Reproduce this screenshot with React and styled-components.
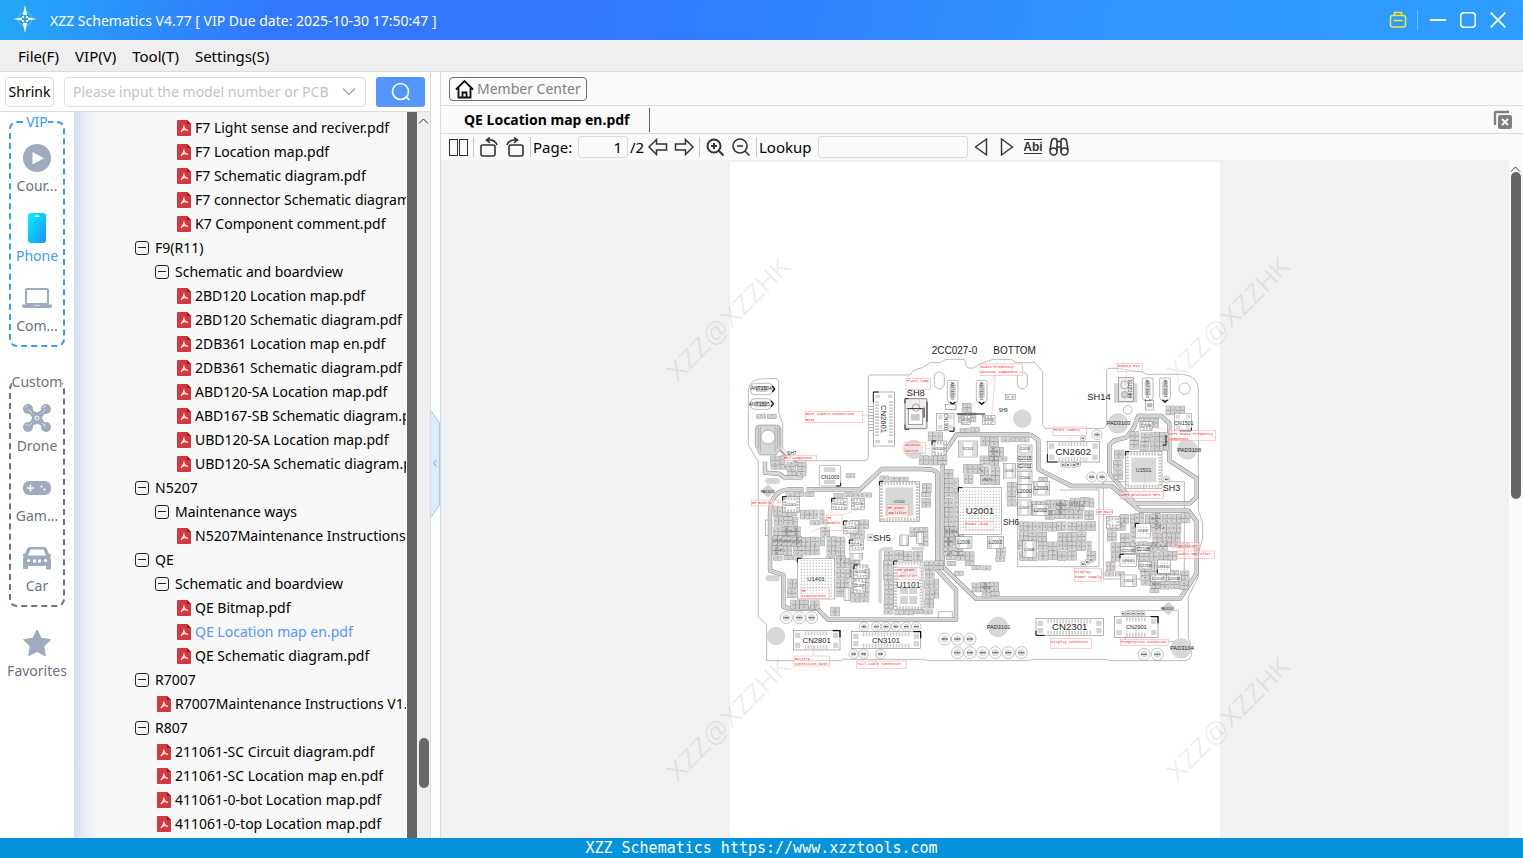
import React, { useState } from "react";
import styled, { createGlobalStyle } from "styled-components";

const GlobalStyle = createGlobalStyle`
  * {
    box-sizing: border-box;
  }
  body {
    margin: 0;
    font-family: "Noto Sans", "Open Sans", sans-serif;
    font-size: 14px;
    color: #000;
  }
  button, input {
    font: inherit;
    color: inherit;
  }
  button {
    padding: 0;
    border: 0;
    background: none;
  }
  svg {
    display: block;
    flex: none;
  }
`;

const Window = styled.div`
  display: flex;
  flex-direction: column;
  height: 100vh;
  overflow: hidden;
`;

const TitleBar = styled.header`
  display: flex;
  align-items: center;
  height: 40px;
  flex: none;
  padding: 0 10px 0 12px;
  background: linear-gradient(100deg, #23a8f6 0%, #3377ff 18%, #3377ff 38%, #2f94ff 72%, #2e9dff 100%);
  color: #fff;
`;

const Title = styled.h1`
  flex: 1;
  margin: 0 0 0 12px;
  font-size: 14px;
  font-weight: 400;
`;

const WindowButton = styled.button`
  display: flex;
  align-items: center;
  justify-content: center;
  width: 30px;
  height: 30px;
`;

const TitleDivider = styled.span`
  width: 1px;
  height: 20px;
  margin: 0 5px 0 4px;
  background: rgba(255, 255, 255, 0.35);
`;

const MenuBar = styled.nav`
  display: flex;
  align-items: center;
  gap: 16px;
  height: 32px;
  flex: none;
  padding: 0 18px;
  background: #efefef;
  border-bottom: 1px solid #dcdcdc;
`;

const MenuItem = styled.button`
  font-size: 15px;
`;

const Body = styled.div`
  display: flex;
  flex: 1;
  min-height: 0;
`;

const Side = styled.aside`
  display: flex;
  flex-direction: column;
  width: 431px;
  flex: none;
  border-right: 1px solid #dcdcdc;
`;

const SearchRow = styled.form`
  display: flex;
  align-items: center;
  gap: 10px;
  height: 40px;
  flex: none;
  padding: 0 5px;
  border-bottom: 1px solid #dcdcdc;
`;

const ShrinkButton = styled.button`
  width: 49px;
  height: 30px;
  border: 1px solid #dcdfe6;
  border-radius: 4px;
  font-size: 14px;
`;

const Combo = styled.label`
  display: flex;
  align-items: center;
  flex: 1;
  height: 30px;
  padding: 0 8px;
  border: 1px solid #dcdfe6;
  border-radius: 4px;
`;

const ComboInput = styled.input`
  flex: 1;
  min-width: 0;
  padding: 0;
  border: 0;
  outline: 0;
  font-size: 14px;
  &::placeholder {
    color: #c0c4cc;
  }
`;

const SearchButton = styled.button`
  display: flex;
  align-items: center;
  justify-content: center;
  width: 49px;
  height: 30px;
  border-radius: 3px;
  background: #5595ff;
`;

const SideBody = styled.div`
  display: flex;
  flex: 1;
  min-height: 0;
`;

const Categories = styled.div`
  width: 74px;
  flex: none;
  background: #fff;
`;

const Group = styled.fieldset`
  width: 56px;
  min-width: 0;
  margin: 0 9px ${(p) => p.$gap}px;
  padding: 10px 0 7px;
  border: 2px dashed ${(p) => p.$color};
  border-radius: 8px;
`;

const GroupName = styled.legend`
  margin: 0 auto;
  padding: 0;
  line-height: 20px;
  color: ${(p) => p.$color};
`;

const Category = styled.button`
  display: flex;
  flex-direction: column;
  align-items: center;
  width: 100%;
  height: 56px;
  color: ${(p) => (p.$active ? "#3a9bfd" : "#6b7280")};
  & + & {
    margin-top: 14px;
  }
`;

const CategoryIcon = styled.span`
  display: flex;
  align-items: center;
  justify-content: center;
  height: 32px;
  color: #a0aabf;
`;

const CategoryName = styled.span`
  line-height: 24px;
`;

const Tree = styled.ul`
  display: flex;
  flex-direction: column;
  justify-content: flex-end;
  flex: 1;
  min-width: 0;
  margin: 0;
  padding: 0 0 2px;
  overflow: hidden;
  list-style: none;
  background: linear-gradient(90deg, #d3def2 0, #e6ecf6 10px, #f4f6f9 22px, #f8f8f8 34px);
`;

const TreeRow = styled.li`
  display: flex;
  align-items: center;
  height: 24px;
  flex: none;
  padding-left: ${(p) => 61 + p.$level * 20}px;
  white-space: nowrap;
`;

const Slot = styled.span`
  width: 20px;
  flex: none;
`;

const TreeLink = styled.a`
  font-size: 14px;
  line-height: 24px;
  color: ${(p) => (p.$selected ? "#5595ff" : "#000")};
  text-decoration: none;
`;

const TreeEdge = styled.div`
  width: 10px;
  flex: none;
  margin-left: 1px;
  background: #666;
`;

const ScrollTrack = styled.div`
  display: flex;
  flex-direction: column;
  align-items: center;
  width: 13px;
  flex: none;
  padding-top: 6px;
  background: ${(p) => p.$background};
`;

const Thumb = styled.div`
  width: 10px;
  height: ${(p) => p.$height}px;
  margin-top: ${(p) => p.$top}px;
  border-radius: 5px;
  background: #666;
`;

const Splitter = styled.div`
  display: flex;
  align-items: center;
  width: 9px;
  flex: none;
  padding-top: 18px;
  background: #fafffa;
`;

const Main = styled.main`
  display: flex;
  flex-direction: column;
  flex: 1;
  min-width: 0;
  border-left: 1px solid #dcdcdc;
  background: #fafafa;
`;

const TopRow = styled.div`
  display: flex;
  align-items: center;
  height: 34px;
  flex: none;
  padding: 0 8px;
  border-bottom: 1px solid #dcdcdc;
`;

const MemberButton = styled.button`
  display: flex;
  align-items: center;
  gap: 3px;
  height: 24px;
  padding: 0 5px;
  border: 1px solid #707070;
  border-radius: 4px;
  color: #808080;
  font-size: 14px;
`;

const TabRow = styled.div`
  display: flex;
  align-items: center;
  justify-content: space-between;
  height: 28px;
  flex: none;
  padding-right: 10px;
  border-bottom: 1px solid #dcdcdc;
`;

const Tab = styled.button`
  height: 24px;
  padding: 0 19px 0 23px;
  border-right: 1px solid #666;
  font-size: 14px;
  font-weight: 700;
`;

const Toolbar = styled.div`
  display: flex;
  align-items: center;
  height: 26px;
  flex: none;
  padding-left: 4px;
`;

const ToolButton = styled.button`
  display: flex;
  align-items: center;
  justify-content: center;
  width: 26px;
  height: 26px;
  color: #333;
`;

const ToolDivider = styled.span`
  width: 1px;
  height: 20px;
  margin: 0 2px;
  background: #c8c8c8;
`;

const ToolLabel = styled.label`
  width: ${(p) => p.$width}px;
  font-size: 15px;
  white-space: nowrap;
`;

const ToolInput = styled.input`
  width: ${(p) => p.$width}px;
  height: 22px;
  padding: 0 5px;
  border: 1px solid #dcdcdc;
  border-radius: 3px;
  background: #fafafa;
  font-size: 15px;
  text-align: right;
`;

const PageTotal = styled.span`
  width: 17px;
  padding-left: 2px;
  font-size: 15px;
`;

const Viewer = styled.div`
  display: flex;
  flex: 1;
  min-height: 0;
  padding-right: 1px;
  overflow: hidden;
`;

const Canvas = styled.div`
  display: flex;
  justify-content: center;
  flex: 1;
  min-width: 0;
  padding-top: 2px;
  overflow: hidden;
  background: #f1f1f1;
`;

const Sheet = styled.div`
  width: 490px;
  height: 693px;
  flex: none;
  background: #fff;
`;

const BoardSvg = styled.svg`
  width: 490px;
  height: 676px;
  overflow: visible;
  font-family: "Liberation Sans", sans-serif;
`;

const Footer = styled.footer`
  height: 20px;
  flex: none;
  background: #0493db;
  color: #fff;
  font-family: "DejaVu Sans Mono", monospace;
  font-size: 15px;
  line-height: 20px;
  text-align: center;
`;

/* ---------- icons ---------- */

const Logo = () => (
  <svg width="26" height="32" viewBox="0 0 26 32">
    <circle cx="13" cy="15" r="7" fill="none" stroke="#fff" strokeOpacity=".3" />
    <path d="M13 1l2.2 10h-4.400zM13 29l2.200-10h-4.400zM1 15l9-1.600v3.200zM25 15l-9-1.600v3.200z" fill="#fff" />
    <path d="M10 12h2v2h-2zM14 12h2v2h-2zM10 16h2v2h-2zM14 16h2v2h-2z" fill="#fff" />
  </svg>
);

const PlayIcon = () => (
  <svg width="28" height="28" viewBox="0 0 28 28">
    <circle cx="14" cy="14" r="14" fill="currentColor" />
    <path d="M9.500 8v12.500L21 14.200z" fill="#fff" />
  </svg>
);

const PhoneIcon = () => (
  <svg width="18" height="30" viewBox="0 0 18 30">
    <defs>
      <linearGradient id="phone" x1="0" y1="0" x2="1" y2="1">
        <stop offset="0" stopColor="#05f0ff" />
        <stop offset="1" stopColor="#1e90ff" />
      </linearGradient>
    </defs>
    <rect width="18" height="30" rx="3" fill="url(#phone)" />
    <rect x="6.500" y="2.500" width="5" height="1.500" rx=".7" fill="#fff" />
  </svg>
);

const LaptopIcon = () => (
  <svg width="30" height="20" viewBox="0 0 30 20">
    <rect x="4" y="1" width="22" height="15" rx="1" fill="none" stroke="currentColor" strokeWidth="2" />
    <path d="M0 16.500h12v1h6v-1h12v1.500q0 2-2 2H2q-2 0-2-2z" fill="currentColor" />
  </svg>
);

const DroneIcon = () => (
  <svg width="28" height="28" viewBox="0 0 28 28" fill="currentColor">
    <path d="M6 6L11 14L6 22M22 6L17 14L22 22M6 6L14 10L22 6M6 22L14 18L22 22" fill="none" stroke="currentColor" strokeWidth="3" />
    <circle cx="5" cy="5" r="5" />
    <circle cx="23" cy="5" r="5" />
    <circle cx="5" cy="23" r="5" />
    <circle cx="23" cy="23" r="5" />
    <circle cx="14" cy="14" r="5" />
    <circle cx="14" cy="14" r="2" fill="none" stroke="#fff" />
    <path d="M2 4q1-2 3-2M20 4q1-2 3-2M2 22q1-2 3-2M20 22q1-2 3-2M5 5l4 4M23 5l-4 4M5 23l4-4M23 23l-4-4" fill="none" stroke="#e4e8f0" strokeWidth=".8" />
  </svg>
);

const GameIcon = () => (
  <svg width="28" height="14" viewBox="0 0 28 14">
    <rect width="28" height="14" rx="6" fill="currentColor" />
    <path d="M7.500 3.500v7M4 7h7" stroke="#fff" strokeWidth="1.600" />
    <circle cx="18.500" cy="5.500" r="1" fill="#fff" />
    <circle cx="21.500" cy="8.500" r="1" fill="#fff" />
  </svg>
);

const CarIcon = () => (
  <svg width="28" height="24" viewBox="0 0 28 24">
    <path
      d="M7 1h14q2 0 3 2l2 5 2 .500v2l-1 .500q1 1.500 1 3v8.500q0 1-1 1h-3q-1 0-1-1V20H5v2q0 1-1 1H1q-1 0-1-1v-8.500q0-1.500 1-3L0 10V8l2-.500 2-4.500q1-2 3-2zM7.500 3.500L5 9.500h18l-2.500-6z"
      fill="currentColor"
      fillRule="evenodd"
    />
    <circle cx="5.500" cy="14.500" r="1.600" fill="#fff" />
    <circle cx="22.500" cy="14.500" r="1.600" fill="#fff" />
    <path d="M10 13.500h3v3h-3zM15 13.500h3v3h-3z" fill="#fff" />
  </svg>
);

const StarIcon = () => (
  <svg width="28" height="28" viewBox="0 0 28 28">
    <path
      d="M14 1.500l4 8 9 1.300-6.500 6.400 1.500 9.200-8-4.300-8 4.300 1.500-9.200L1 10.800l9-1.300z"
      fill="currentColor"
      stroke="currentColor"
      strokeWidth="1.500"
      strokeLinejoin="round"
    />
  </svg>
);

const PdfIcon = () => (
  <svg width="18" height="16" viewBox="-2 0 18 16">
    <path d="M1 0h9l4 4v11q0 1-1 1H1q-1 0-1-1V1q0-1 1-1z" fill="#d3383f" />
    <path d="M10 0l4 4h-4z" fill="#8f1a20" />
    <path d="M6.800 5.500q.500 3-3 6.500M6.800 5.500q.200 4 4.200 5M4.500 10.800q3-1.800 6.500-.600" fill="none" stroke="#fff" strokeWidth="1.100" />
  </svg>
);

const CollapseIcon = () => (
  <svg width="14" height="14" viewBox="0 0 14 14" fill="none" stroke="#222">
    <rect x=".5" y=".5" width="13" height="13" rx="2.500" />
    <path d="M3 6.500h8" />
  </svg>
);

const UpCaret = () => (
  <svg width="11" height="6" viewBox="0 0 11 6" fill="none" stroke="#333">
    <path d="M1 5.500l4.500-4.500L10 5.500" />
  </svg>
);

const Stroke = ({ size = 20, width = 1.6, children }) => (
  <svg width={size} height={size} viewBox="0 0 20 20" fill="none" stroke="currentColor" strokeWidth={width}>
    {children}
  </svg>
);

/* ---------- board drawing ---------- */

// areas packed with small passives: x, y, w, h
const CLUSTERS = [
  [535, 275, 70, 26], [535, 345, 80, 26], [50, 220, 45, 22], [90, 345, 42, 48], [140, 365, 40, 38],
  [612, 385, 42, 240], [665, 190, 32, 30], [618, 193, 30, 16], [652, 218, 100, 36], [660, 262, 60, 10],
  [670, 372, 80, 62], [720, 290, 60, 150], [782, 290, 95, 12], [745, 320, 40, 42], [135, 455, 82, 14],
  [280, 458, 110, 14], [418, 408, 124, 14], [545, 428, 30, 48], [545, 475, 30, 60],
  [1120, 330, 36, 90], [1168, 272, 26, 60], [1200, 275, 80, 55], [1200, 235, 60, 28], [1275, 195, 50, 28],
  [800, 425, 30, 80], [830, 480, 130, 45], [990, 472, 70, 34], [895, 410, 20, 14], [318, 400, 34, 18],
  [100, 500, 72, 155], [178, 510, 72, 52], [95, 560, 160, 92], [258, 590, 66, 70], [285, 655, 40, 120],
  [330, 655, 66, 130], [140, 715, 32, 62], [150, 780, 92, 26], [330, 540, 40, 60], [430, 632, 30, 190],
  [460, 632, 90, 30], [552, 660, 40, 150], [462, 808, 110, 24], [478, 560, 74, 58], [270, 800, 34, 26],
  [612, 560, 40, 90], [618, 632, 96, 44], [695, 727, 60, 40], [695, 675, 42, 20], [640, 690, 24, 24],
  [835, 545, 222, 122], [915, 480, 145, 60], [880, 660, 36, 30], [720, 725, 55, 40], [766, 620, 22, 40],
  [1100, 545, 50, 66], [1185, 520, 75, 50], [1235, 520, 110, 100], [1110, 605, 210, 58], [1095, 665, 50, 50],
  [1200, 665, 60, 75], [1230, 690, 100, 56], [1230, 745, 34, 18], [1140, 520, 40, 90],
];

// lays small two-pad parts on a rough grid, the same way on every render
const scatter = () => {
  let seed = 7;
  const rand = () => {
    seed = (seed * 16807) % 2147483647;
    return seed / 2147483647;
  };
  let bodies = "";
  let pads = "";
  let marks = "";
  const box = (x, y, w, h) => `M${x.toFixed(1)} ${y.toFixed(1)}h${w}v${h}h${-w}z`;
  CLUSTERS.forEach(([cx, cy, cw, ch]) => {
    for (let y = cy; y < cy + ch - 8; y += 29) {
      for (let x = cx; x < cx + cw - 10; x += 29) {
        const r = rand();
        if (r < 0.08) continue;
        const dx = rand() * 4;
        const dy = rand() * 4;
        const tall = cy + ch - y > 24;
        if (r > 0.5 && tall) {
          [0, 14].forEach((o) => {
            if (x + o + 12 > cx + cw + 4) return;
            bodies += box(x + dx + o, y + dy, 12, 26);
            pads += box(x + dx + o + 1, y + dy + 1, 10, 7) + box(x + dx + o + 1, y + dy + 18, 10, 7);
            marks += `M${x + dx + o + 4} ${y + dy + 9}v8m4 0v-8`;
          });
        } else {
          (tall ? [0, 14] : [0]).forEach((o) => {
            bodies += box(x + dx, y + dy + o, 26, 12);
            pads += box(x + dx + 1, y + dy + o + 1, 7, 10) + box(x + dx + 18, y + dy + o + 1, 7, 10);
            marks += `M${x + dx + 9} ${y + dy + o + 4}h8m0 4h-8`;
          });
        }
      }
    }
  });
  return { bodies, pads, marks };
};

const PARTS = scatter();

const BANDS = [
  "M190 448H145Q90 455 90 520V692L130 705V800L148 806H232L265 839H648V750L592 690V400Q588 386 550 388",
  "M200 448H360L425 387H550",
  "M870 283H650L608 345V680L708 776H1320L1370 700V545L1345 512H1200L1115 438H995L895 388V300L870 283",
  "M1108 400V315L1122 302L1160 292L1182 262L1195 228H1265L1288 250V362L1370 415V470L1350 490H1185L1108 400",
  "M75 365V398L120 402L132 412H182V375L160 368",
];

// x, y, w, h, label, text size, pin layout
const CHIPS = [
  [418, 424, 120, 121, "U1100", 11, "ring"],
  [655, 443, 130, 140, "U2001", 29, "dots"],
  [172, 655, 112, 122, "U1401", 18, "dots"],
  [461, 663, 88, 146, "U1101", 25, "ring"],
  [1156, 335, 110, 110, "U1501", 16, "ring"],
  [655, 303, 58, 48, "X2101", 11, ""],
  [576, 303, 44, 44, "U1005", 12, "ring"],
  [128, 470, 50, 48, "U1001", 11, "ring"],
  [275, 475, 46, 34, "U1204", 10, "ring"],
  [334, 475, 40, 34, "U1205", 10, "ring"],
  [310, 543, 44, 38, "U1214", 12, "ring"],
  [328, 600, 42, 30, "U1213", 10, "ring"],
  [342, 675, 42, 40, "U1204", 11, "ring"],
  [340, 715, 36, 44, "U1402", 10, "ring"],
  [312, 744, 18, 38, "", 10, ""],
  [480, 585, 26, 32, "", 10, ""],
  [530, 577, 20, 34, "", 10, ""],
  [664, 226, 28, 28, "U1501", 8, "ring"],
  [727, 226, 38, 28, "U1006", 9, "ring"],
  [1186, 550, 46, 44, "U1403", 10, "dots"],
  [1140, 643, 50, 36, "U3001", 12, "dots"],
  [1252, 660, 40, 40, "U3101", 12, "dots"],
  [1142, 705, 48, 34, "L3102", 10, ""],
  [1100, 530, 40, 34, "", 10, "ring"],
  [1200, 245, 36, 26, "L1503", 10, "ring"],
  [646, 590, 50, 36, "L2006", 14, ""],
  [742, 590, 48, 36, "L2003", 14, ""],
  [832, 433, 42, 40, "L2000", 16, ""],
  [880, 425, 48, 40, "L2001", 16, ""],
  [833, 480, 40, 45, "L2007", 11, ""],
  [878, 493, 46, 34, "L2002", 15, ""],
  [848, 603, 40, 50, "L2008", 11, ""],
  [832, 315, 44, 24, "C2018", 10, ""],
  [832, 345, 44, 20, "C2015", 14, ""],
  [832, 370, 44, 20, "C2011", 14, ""],
  [832, 395, 44, 38, "C2004", 11, ""],
  [790, 370, 36, 44, "L2005", 9, ""],
  [1232, 705, 46, 20, "L2207", 13, ""],
  [1280, 705, 44, 20, "L2208", 13, ""],
  [1188, 617, 44, 22, "C2108", 14, ""],
  [1142, 620, 42, 20, "C2109", 13, ""],
  [1195, 665, 40, 22, "C2218", 13, ""],
  [330, 640, 38, 20, "", 10, ""],
];

// x, y, w, h, label, text size, vertical
const CONNECTORS = [
  [400, 156, 64, 162, "CN2601", 23, true],
  [922, 304, 156, 62, "CN2602", 29],
  [160, 392, 140, 58, "CN2801", 23, false, 480],
  [334, 395, 208, 50, "CN3101", 23, false, 480],
  [888, 356, 202, 50, "CN2301", 29, false, 480],
  [1124, 350, 130, 62, "CN2901", 17, false, 480],
];

const TEXTS = [
  [575, 41, "2CC027-0", 30], [760, 41, "BOTTOM", 30], [500, 167, "SH8", 28], [1042, 180, "SH14", 28],
  [142, 345, "SH7", 14], [400, 602, "SH5", 27], [789, 556, "SH6", 25], [1268, 452, "SH3", 27],
  [776, 217, "SH9", 14], [32, 151, "ANT1504", 15], [26, 197, "ANT1505", 15], [1100, 255, "PAD3103", 17],
  [1312, 335, "PAD3108", 17], [740, 867, "PAD3101", 17], [1290, 931, "PAD3104", 17], [1302, 255, "CN1501", 16],
  [243, 416, "CN1003", 15], [62, 458, "PAD3102", 10], [1262, 809, "PAD3105", 9],
];

// box x, y, w, h then the lines of text
const NOTES = [
  [196, 214, 171, 34, "Rear Camera Connection", "Base"],
  [498, 115, 74, 33, "Flash lamp"],
  [492, 307, 64, 34, "Antenna", "switch"],
  [130, 346, 100, 16, "GPS Component"],
  [34, 480, 82, 18, "RF module"],
  [720, 72, 127, 35, "Radio Frequency", "Antenna Component"],
  [1132, 70, 75, 24, "Deputy mix"],
  [939, 261, 101, 26, "Front camera"],
  [1285, 272, 142, 30, "WiFi Radio Frequency", "Component"],
  [1140, 455, 130, 20, "WiFi Bluetooth GPS"],
  [260, 525, 46, 46, "RF", "module"],
  [441, 494, 64, 38, "RF power", "amplifier"],
  [676, 544, 86, 24, "Power chip"],
  [472, 682, 72, 36, "RF power", "amplifier"],
  [183, 744, 85, 32, " RF", "transceiver"],
  [162, 948, 107, 30, "Battery", "connection base"],
  [350, 963, 150, 22, "Tail cable connector"],
  [932, 896, 122, 29, "Display connector"],
  [1141, 898, 145, 18, "Fingerprint Connector"],
  [1003, 686, 82, 38, "Display", "Power Supply"],
  [1070, 508, 48, 15, "OR main"],
  [1312, 608, 66, 16, "gyroscope"],
  [1312, 633, 112, 22, "audio amplifier"],
];

const LEADERS =
  "M358 225L430 233M543 148L533 225M556 325L595 325M150 360L95 380M116 488L150 486M766 105L680 225M766 105L755 225M1160 94L1155 135M990 287L995 320M1285 272L1230 258M1212 455L1213 400M306 525L355 508M260 560L210 575M306 571L340 608M220 948V915M408 963V910M988 896V850M1188 898V852M1085 700L1160 665M1110 523L1120 560M1312 614L1220 580M1312 640L1280 665";

const VIAS = [
  [139, 833, 18], [178, 833, 18], [215, 833, 18], [372, 860, 14], [409, 860, 14], [438, 860, 14], [468, 860, 14],
  [499, 860, 14], [529, 860, 14], [341, 942, 14], [371, 942, 14], [422, 942, 14], [614, 897, 18], [652, 897, 18],
  [690, 897, 18], [652, 938, 18], [690, 938, 18], [728, 938, 18], [766, 938, 18], [805, 938, 18], [844, 938, 18],
  [1212, 943, 18], [1252, 943, 18], [1071, 284, 15], [1029, 295, 8], [1055, 411, 15], [1086, 411, 15],
  [970, 375, 8], [984, 375, 8], [1002, 375, 8], [1014, 372, 8], [1280, 418, 10], [391, 592, 10], [1030, 672, 8],
  [1042, 666, 8], [1054, 660, 8], [1150, 821, 7], [1165, 821, 7], [1180, 821, 7], [1195, 821, 7], [1208, 821, 7],
];

const DISCS = [[521, 328, 28], [847, 236, 27], [1134, 250, 30], [1342, 328, 30], [774, 861, 30], [1323, 925, 30], [108, 888, 27]];

const Chip = ({ data: [x, y, w, h, label, size, pins] }) => (
  <g>
    <rect x={x} y={y} width={w} height={h} fill="#fff" stroke="#777" strokeWidth="1.500" />
    {pins === "ring" && (
      <g>
        <rect x={x + 6} y={y + 6} width={w - 12} height={h - 12} fill="none" stroke="#c4c4c4" strokeWidth="9" strokeDasharray="5 4" />
        {w > 60 && label !== "U1101" && <rect x={x + 18} y={y + 18} width={w - 36} height={h - 36} fill="#d8d8d8" />}
        {label === "U1101" && (
          <path d="M480 682h24v24h-24zM508 682h24v24h-24zM480 740h24v22h-24zM508 740h24v22h-24zM480 768h24v24h-24zM508 768h24v24h-24z" fill="#d4d4d4" />
        )}
      </g>
    )}
    {pins === "dots" && <rect x={x + 5} y={y + 5} width={w - 10} height={h - 10} fill="url(#balls)" />}
    {pins === "" && (
      <path d={`M${x + 2} ${y + 2}h${w * 0.25}v${h - 4}h${-w * 0.25}zM${x + w * 0.75 - 2} ${y + 2}h${w * 0.25}v${h - 4}h${-w * 0.25}z`} fill="#dcdcdc" />
    )}
    {w > 40 && pins !== "" && <path d={`M${x} ${y + 12}v-12h12`} fill="none" stroke="#111" strokeWidth="3" />}
    <text x={x + w / 2} y={y + h / 2 + size * 0.36} fontSize={size} textAnchor="middle" fill="#333">
      {label}
    </text>
  </g>
);

const Connector = ({ data: [x, y0, w, h, label, size, vertical, shift = 0] }) => {
  const y = y0 + shift;
  const cx = x + w / 2;
  const cy = y + h / 2;
  const pins = vertical
    ? `M${x + 11} ${y + 28}V${y + h - 28}M${x + w - 11} ${y + 28}V${y + h - 28}`
    : `M${x + 34} ${y + 8}H${x + w - 34}M${x + 34} ${y + h - 8}H${x + w - 34}`;
  return (
    <g>
      <rect x={x} y={y} width={w} height={h} fill="#fff" stroke="#666" strokeWidth="1.500" />
      <path d={pins} stroke="#cfcfcf" strokeWidth="12" strokeDasharray="5 4" />
      {vertical ? (
        <path d={`M${x + 6} ${y + 8}h14v10h-14zM${x + w - 20} ${y + 8}h14v10h-14zM${x + 6} ${y + h - 18}h14v10h-14zM${x + w - 20} ${y + h - 18}h14v10h-14z`} fill="#d4d4d4" />
      ) : (
        <path d={`M${x + 5} ${y + 6}h16v16h-16zM${x + w - 21} ${y + 6}h16v16h-16zM${x + 5} ${y + h - 22}h16v16h-16zM${x + w - 21} ${y + h - 22}h16v16h-16z`} fill="#d4d4d4" />
      )}
      {(vertical || y < 400) && <path d={vertical ? `M${x} ${y + 30}v-30h16` : `M${x} ${y + h - 24}v24h30`} fill="none" stroke="#111" strokeWidth="3" />}
      {!vertical && y > 400 && label !== "CN2301" && <path d={`M${x + w - 22} ${y}h22v20`} fill="none" stroke="#111" strokeWidth="4" />}
      {label === "CN2301" && <path d={`M${x} ${y + h - 14}v14h26`} fill="none" stroke="#111" strokeWidth="3" />}
      <text
        x={cx}
        y={cy + size * 0.36}
        fontSize={size}
        textAnchor="middle"
        fill="#222"
        transform={vertical ? `rotate(90 ${cx} ${cy})` : undefined}
      >
        {label}
      </text>
    </g>
  );
};

// upright antenna contact with a black tip
const Antenna = ({ x, y, label }) => (
  <g>
    <path d={`M${x + 4} ${y}h24q4 0 4 4v52q0 12-10 12h-12q-10 0-10-12v-52q0-4 4-4z`} fill="#fff" stroke="#777" strokeWidth="1.500" />
    <rect x={x + 7} y={y + 10} width="18" height="42" fill="#d0d0d0" />
    <path d={`M${x + 8} ${y + 65}l8 7l8-7`} fill="none" stroke="#111" strokeWidth="4" />
    <text x={x + 16} y={y + 36} fontSize="13" textAnchor="middle" fill="#444" transform={`rotate(90 ${x + 16} ${y + 32})`}>
      {label}
    </text>
  </g>
);

const Board = () => (
  <BoardSvg viewBox="-30 -534 1470 2028" role="img" aria-label="2CC027-0 BOTTOM">
    <defs>
      <pattern id="balls" width="9" height="9" patternUnits="userSpaceOnUse">
        <rect x="2" y="2" width="4" height="4" fill="#c8c8c8" />
      </pattern>
    </defs>

    <g fill="none" stroke="#999" strokeWidth="2">
      <path d="M25 150Q30 116 70 116H112L116 122V220L128 250V325L165 362H370Q385 362 385 345V110L390 105H510L520 92L548 82L570 68H600L618 58H672Q678 60 678 78L684 84H700L720 72L760 58H815L825 68H885L908 95V255L916 265H1090Q1100 262 1100 250V90L1106 85H1132L1207 96L1220 103H1330Q1375 110 1375 150V510L1388 550V595L1375 640V710L1345 770V895Q1355 910 1354 945Q1350 962 1330 962H1105L1100 958H875L865 962H565L550 958H310L305 962H80V855L55 830V365L25 315Z" />
      <rect x="583" y="96" width="30" height="50" rx="14" />
      <rect x="832" y="96" width="30" height="50" rx="14" />
      <circle cx="1334" cy="146" r="17" />
      <circle cx="1163" cy="210" r="13" />
      <path d="M833 425V680H1077V450H960M1090 425H1333V717H1090ZM1156 815V900M1156 812H1315V904M595 835V815H637V835M1285 904H1315" />
      <rect x="76" y="540" width="10" height="46" />
    </g>

    <path d="M60 255H110Q123 256 123 270V325L108 345H60L46 318V270Q46 255 60 255Z" fill="#d6d6d6" stroke="#777" strokeWidth="1.500" />
    <path d="M55 262V325M61 260V335M105 260V335M112 262V325M118 262V320" stroke="#888" strokeWidth="1.500" />
    <circle cx="84" cy="291" r="21" fill="#fff" stroke="#999" strokeWidth="2" />
    <path d="M120 330L140 350" stroke="#aaa" strokeWidth="7" />

    <g fill="none" strokeLinejoin="round">
      {BANDS.map((d) => (
        <path key={d} d={d} stroke="#808080" strokeWidth="13" />
      ))}
      {BANDS.map((d) => (
        <path key={d} d={d} stroke="#dadada" strokeWidth="10" />
      ))}
      {BANDS.slice(0, 4).map((d) => (
        <path key={d} d={d} stroke="#b8b8b8" strokeWidth="1.500" />
      ))}
      <path d="M420 790V640Q420 626 436 626H458M516 626H552" stroke="#d6d6d6" strokeWidth="10" />
    </g>

    <path d={PARTS.bodies} fill="#fafafa" stroke="#6c6c6c" strokeWidth="1.500" />
    <path d={PARTS.pads} fill="#d0d0d0" />
    <path d={PARTS.marks} stroke="#555" strokeWidth="1.500" />

    {DISCS.map(([x, y, r]) => (
      <circle key={x} cx={x} cy={y} r={r} fill="#d8d8d8" stroke="#c4c4c4" />
    ))}
    <rect x="76" y="414" width="44" height="18" rx="9" fill="#d6d6d6" />
    <rect x="76" y="706" width="44" height="18" rx="9" fill="#d6d6d6" />
    <path d="M84 434l20 19l-20 19l-20-19zM1285 786l20 19l-20 19l-20-19z" fill="#d0d0d0" stroke="#aaa" />

    {VIAS.map(([x, y, r]) => (
      <g key={`${x}-${y}`}>
        <circle cx={x} cy={y} r={r} fill="#fff" stroke="#888" strokeWidth="1.500" />
        <circle cx={x} cy={y} r={r * 0.6} fill="#ddd" />
        <path d={`M${x - r * 0.5} ${y}h${r}`} stroke="#555" strokeWidth="4" strokeDasharray="3 1" />
      </g>
    ))}

    {CONNECTORS.map((c) => (
      <Connector key={c[4]} data={c} />
    ))}
    <path d="M393 198V275" stroke="#999" strokeWidth="12" strokeDasharray="2 7" />
    {CHIPS.map((c) => (
      <Chip key={`${c[0]}-${c[1]}`} data={c} />
    ))}

    <rect x="495" y="176" width="66" height="90" rx="3" fill="#ededed" stroke="#888" strokeWidth="3" />
    <rect x="505" y="206" width="42" height="48" fill="#fff" stroke="#777" strokeWidth="2" />
    <rect x="513" y="222" width="26" height="20" fill="#ccc" />
    <circle cx="528" cy="203" r="11" fill="none" stroke="#777" strokeWidth="2" />
    <path d="M495 190v-14h10M495 254v14h12M500 206h48M561 185v60" fill="none" stroke="#111" strokeWidth="2.500" />
    <rect x="590" y="220" width="52" height="52" fill="#fff" stroke="#777" strokeWidth="1.500" />
    <path d="M594 224h14v14h-14zM624 224h14v14h-14zM594 254h14v14h-14zM624 254h14v14h-14z" fill="#ddd" />
    <text x="616" y="250" fontSize="14" textAnchor="middle" transform="rotate(90 616 246)" fill="#333">CN1001</text>
    <rect x="238" y="376" width="64" height="62" rx="4" fill="#fff" stroke="#777" strokeWidth="1.500" />
    <path d="M252 382h34v14h-34zM252 420h34v12h-34z" fill="#d4d4d4" />
    <path d="M302 428v10h-14M650 222h85M642 262v12h-14M552 203v30" fill="none" stroke="#111" strokeWidth="3" />
    <path d="M1122 130h70v58h-70z" fill="#d4d4d4" />
    <rect x="1136" y="112" width="44" height="72" fill="#eee" stroke="#666" strokeWidth="1.500" />
    <circle cx="1154" cy="135" r="12" fill="none" stroke="#888" strokeWidth="2" />
    <circle cx="1154" cy="164" r="10" fill="#ccc" stroke="#999" strokeWidth="2" />
    <text x="1172" y="150" fontSize="14" textAnchor="middle" transform="rotate(-90 1172 145)" fill="#333">MIC2701</text>
    <rect x="1304" y="220" width="50" height="50" fill="#fff" stroke="#888" strokeWidth="1.500" />
    <path d="M1308 224h12v12h-12zM1338 224h12v12h-12zM1308 256h12v12h-12zM1338 256h12v12h-12z" fill="#ddd" />
    <path d="M1318 273h36v-10M1278 285v30h-10M1252 700v-12" fill="none" stroke="#111" strokeWidth="3" />

    <Antenna x={622} y={121} label="ANT1502" />
    <Antenna x={709} y={121} label="ANT1503" />
    <Antenna x={1207} y={114} label="ANT1503" />
    <Antenna x={1259} y={114} label="ANT1501" />
    <g fill="#fff" stroke="#777" strokeWidth="1.500">
      <rect x="32" y="130" width="66" height="34" rx="12" />
      <rect x="32" y="176" width="62" height="32" rx="12" />
    </g>
    <path d="M48 138h34v18h-34zM46 183h34v18h-34z" fill="#ccc" />
    <path d="M97 138l7 9l-7 9M93 182l7 9l-7 9" fill="none" stroke="#111" strokeWidth="4" />
    <g fill="#fafafa" stroke="#777" strokeWidth="1.500">
      <rect x="796" y="163" width="30" height="16" />
      <rect x="616" y="194" width="32" height="14" />
      <rect x="1217" y="182" width="24" height="28" />
    </g>
    <path d="M800 167h8v8h-8zM814 167h8v8h-8zM1221 190h16v12h-16z" fill="#bbb" />

    {TEXTS.map(([x, y, text, size]) => (
      <text key={text} x={x} y={y} fontSize={size} fill="#222">
        {text}
      </text>
    ))}

    <path d={LEADERS} stroke="#ff9a9a" strokeWidth="1.200" />
    {NOTES.map(([x, y, w, h, ...lines]) => (
      <g key={`${x}-${y}`}>
        <rect x={x} y={y} width={w} height={h} fill="#fff" fillOpacity=".4" stroke="#ff9a9a" strokeWidth="1.500" />
        {lines.map((line, i) => (
          <text key={line} x={x + 2} y={y + 12 + i * 16} fontFamily="Liberation Mono, monospace" fontSize="11" fill="#ff2020">
            {line}
          </text>
        ))}
      </g>
    ))}

    {[[-189, 129], [1311, 129], [-189, 1329], [1311, 1329]].map(([x, y]) => (
      <text key={`${x}-${y}`} transform={`translate(${x} ${y}) rotate(-45)`} fontSize="79" fill="#000" fillOpacity=".08">
        XZZ@XZZHK
      </text>
    ))}
  </BoardSvg>
);

/* ---------- data ---------- */

const GROUPS = [
  {
    name: "VIP",
    color: "#3a9bfd",
    gap: 25,
    items: [
      { name: "Cour...", icon: PlayIcon },
      { name: "Phone", icon: PhoneIcon, active: true },
      { name: "Com...", icon: LaptopIcon },
    ],
  },
  {
    name: "Custom",
    color: "#6b7280",
    gap: 20,
    items: [
      { name: "Drone", icon: DroneIcon },
      { name: "Gam...", icon: GameIcon },
      { name: "Car", icon: CarIcon },
    ],
  },
];

const TREE = [
  [2, "F7 Light sense and reciver.pdf"],
  [2, "F7 Location map.pdf"],
  [2, "F7 Schematic diagram.pdf"],
  [2, "F7 connector Schematic diagram.pdf"],
  [2, "K7 Component comment.pdf"],
  [0, "F9(R11)"],
  [1, "Schematic and boardview"],
  [2, "2BD120 Location map.pdf"],
  [2, "2BD120 Schematic diagram.pdf"],
  [2, "2DB361 Location map en.pdf"],
  [2, "2DB361 Schematic diagram.pdf"],
  [2, "ABD120-SA Location map.pdf"],
  [2, "ABD167-SB Schematic diagram.pdf"],
  [2, "UBD120-SA Location map.pdf"],
  [2, "UBD120-SA Schematic diagram.pdf"],
  [0, "N5207"],
  [1, "Maintenance ways"],
  [2, "N5207Maintenance Instructions.pdf"],
  [0, "QE"],
  [1, "Schematic and boardview"],
  [2, "QE Bitmap.pdf"],
  [2, "QE Location map en.pdf"],
  [2, "QE Schematic diagram.pdf"],
  [0, "R7007"],
  [1, "R7007Maintenance Instructions V1.pdf"],
  [0, "R807"],
  [1, "211061-SC Circuit diagram.pdf"],
  [1, "211061-SC Location map en.pdf"],
  [1, "411061-0-bot Location map.pdf"],
  [1, "411061-0-top Location map.pdf"],
];

const App = () => {
  const [selected, setSelected] = useState("QE Location map en.pdf");

  return (
    <Window>
      <GlobalStyle />
      <TitleBar>
        <Logo />
        <Title>XZZ Schematics V4.77 [ VIP Due date: 2025-10-30 17:50:47 ]</Title>
        <WindowButton aria-label="Toolbox">
          <svg width="18" height="18" viewBox="0 0 18 18" fill="none" stroke="#f0e63c" strokeWidth="1.500">
            <rect x="1.500" y="4.500" width="15" height="11.500" rx="2" />
            <path d="M5.500 4.500V1.500h7v3M4.500 9.500h9" />
          </svg>
        </WindowButton>
        <TitleDivider />
        <WindowButton aria-label="Minimize">
          <svg width="16" height="16" viewBox="0 0 16 16" stroke="#fff" strokeWidth="2">
            <path d="M0 8h16" />
          </svg>
        </WindowButton>
        <WindowButton aria-label="Maximize">
          <svg width="16" height="16" viewBox="0 0 16 16" fill="none" stroke="#fff" strokeWidth="1.500">
            <rect x=".8" y=".8" width="14.400" height="14.400" rx="3" />
          </svg>
        </WindowButton>
        <WindowButton aria-label="Close">
          <svg width="16" height="16" viewBox="0 0 16 16" stroke="#fff" strokeWidth="1.800">
            <path d="M.5.500l15 15M15.500.500l-15 15" />
          </svg>
        </WindowButton>
      </TitleBar>

      <MenuBar>
        <MenuItem>File(F)</MenuItem>
        <MenuItem>VIP(V)</MenuItem>
        <MenuItem>Tool(T)</MenuItem>
        <MenuItem>Settings(S)</MenuItem>
      </MenuBar>

      <Body>
        <Side>
          <SearchRow onSubmit={(e) => e.preventDefault()}>
            <ShrinkButton type="button">Shrink</ShrinkButton>
            <Combo>
              <ComboInput aria-label="Model number" placeholder="Please input the model number or PCB" />
              <svg width="16" height="10" viewBox="0 0 16 10" fill="none" stroke="#a8abb2" strokeWidth="1.500">
                <path d="M2 1.500l6 6 6-6" />
              </svg>
            </Combo>
            <SearchButton aria-label="Search">
              <svg width="20" height="20" viewBox="0 0 20 20" fill="none" stroke="#fff" strokeWidth="1.600">
                <circle cx="9.500" cy="9.500" r="8" />
                <path d="M15.200 15.200l3.300 3" />
              </svg>
            </SearchButton>
          </SearchRow>

          <SideBody>
            <Categories>
              {GROUPS.map((group) => (
                <Group key={group.name} $color={group.color} $gap={group.gap}>
                  <GroupName $color={group.color}>{group.name}</GroupName>
                  {group.items.map(({ name, icon: Icon, active }) => (
                    <Category key={name} $active={active}>
                      <CategoryIcon>
                        <Icon />
                      </CategoryIcon>
                      <CategoryName>{name}</CategoryName>
                    </Category>
                  ))}
                </Group>
              ))}
              <Category>
                <CategoryIcon>
                  <StarIcon />
                </CategoryIcon>
                <CategoryName>Favorites</CategoryName>
              </Category>
            </Categories>

            <Tree>
              {TREE.map(([level, name], idx) => {
                const isFile = name.endsWith(".pdf");
                return (
                  <TreeRow key={idx} $level={level}>
                    <Slot>{isFile ? <PdfIcon /> : <CollapseIcon />}</Slot>
                    <TreeLink href="#" $selected={name === selected} onClick={() => isFile && setSelected(name)}>
                      {name}
                    </TreeLink>
                  </TreeRow>
                );
              })}
            </Tree>
            <TreeEdge />
            <ScrollTrack $background="#efefef">
              <UpCaret />
              <Thumb $height={50} $top={614} />
            </ScrollTrack>
          </SideBody>
        </Side>

        <Splitter>
          <button aria-label="Collapse panel">
            <svg width="9" height="108" viewBox="0 0 9 108" fill="#d8ebff" stroke="#9ccfff">
              <path d="M0 .5L8.500 13V95L0 107.500" />
              <path d="M5.500 50.500L2.500 53.500L5.500 56.500" fill="none" stroke="#4da3f5" />
            </svg>
          </button>
        </Splitter>

        <Main>
          <TopRow>
            <MemberButton>
              <svg width="19" height="20" viewBox="0 0 19 20" fill="none" stroke="#111" strokeWidth="1.800">
                <path d="M1 10.500L9.500 2L18 10.500M3.500 9v9.500h12V9" />
                <path d="M7.500 18.500v-5h4v5" />
              </svg>
              Member Center
            </MemberButton>
          </TopRow>
          <TabRow>
            <Tab>QE Location map en.pdf</Tab>
            <button aria-label="Close all tabs">
              <svg width="20" height="20" viewBox="0 0 20 20">
                <path d="M2 15V3q0-1 1-1h13" fill="none" stroke="#808080" strokeWidth="2.400" />
                <rect x="5" y="5" width="14" height="14" rx="2" fill="#808080" />
                <path d="M9 9l6 6M15 9l-6 6" stroke="#fff" strokeWidth="1.800" />
              </svg>
            </button>
          </TabRow>
          <Toolbar>
            <ToolButton aria-label="Two pages">
              <Stroke width={1}>
                <rect x="1.500" y="2.500" width="8" height="16" />
                <rect x="11.500" y="2.500" width="8" height="16" />
              </Stroke>
            </ToolButton>
            <ToolDivider />
            <ToolButton aria-label="Rotate left">
              <Stroke>
                <rect x="2" y="8" width="14" height="11" rx="2" />
                <path d="M8 3q8-1 10 5M11 .5L7.500 3L11 5.800" />
              </Stroke>
            </ToolButton>
            <ToolButton aria-label="Rotate right">
              <Stroke>
                <rect x="4" y="8" width="14" height="11" rx="2" />
                <path d="M12 3q-8-1-10 5M9 .5L12.500 3L9 5.800" />
              </Stroke>
            </ToolButton>
            <ToolDivider />
            <ToolLabel htmlFor="page" $width={45}>
              Page:
            </ToolLabel>
            <ToolInput id="page" $width={50} defaultValue="1" />
            <PageTotal>/2</PageTotal>
            <ToolButton aria-label="Previous page">
              <Stroke width={1.5}>
                <path d="M1 10l7.500-7.500V7H18.500v6H8.500v4.500z" />
              </Stroke>
            </ToolButton>
            <ToolButton aria-label="Next page">
              <Stroke width={1.5}>
                <path d="M19 10l-7.500-7.500V7H1.500v6h10v4.500z" />
              </Stroke>
            </ToolButton>
            <ToolDivider />
            <ToolButton aria-label="Zoom in">
              <Stroke width={2}>
                <circle cx="9" cy="9" r="6.500" />
                <path d="M14 14l4.500 4.500M6 9h6M9 6v6" />
              </Stroke>
            </ToolButton>
            <ToolButton aria-label="Zoom out">
              <Stroke>
                <circle cx="9" cy="9" r="7" />
                <path d="M14 14l4.500 4.500M6 9h6" />
              </Stroke>
            </ToolButton>
            <ToolDivider />
            <ToolLabel htmlFor="lookup" $width={59}>
              Lookup
            </ToolLabel>
            <ToolInput id="lookup" $width={150} />
            <ToolButton aria-label="Find previous">
              <Stroke width={1.4}>
                <path d="M15.500 2L4.500 10l11 8z" />
              </Stroke>
            </ToolButton>
            <ToolButton aria-label="Find next">
              <Stroke width={1.4}>
                <path d="M4.500 2l11 8-11 8z" />
              </Stroke>
            </ToolButton>
            <ToolButton aria-label="Match case">
              <svg width="18" height="16" viewBox="0 0 18 16">
                <path d="M0 .5h18M0 14.500h18" stroke="#333" />
                <text x="9" y="12" fontSize="12" fontWeight="700" textAnchor="middle" fill="#333" fontFamily="Liberation Sans, sans-serif">
                  Abi
                </text>
              </svg>
            </ToolButton>
            <ToolButton aria-label="Search document">
              <Stroke>
                <path d="M1 13L2.500 4q.500-2.500 3-2.500T8 4v10M19 13L17.500 4q-.500-2.500-3-2.500T12 4v10M8 4.500h4M8 10h4" />
                <circle cx="4.500" cy="14.500" r="3.500" />
                <circle cx="15.500" cy="14.500" r="3.500" />
              </Stroke>
            </ToolButton>
          </Toolbar>
          <Viewer>
            <Canvas>
              <Sheet>
                <Board />
              </Sheet>
            </Canvas>
            <ScrollTrack $background="#fafafa">
              <UpCaret />
              <Thumb $height={327} $top={0} />
            </ScrollTrack>
          </Viewer>
        </Main>
      </Body>
      <Footer>XZZ Schematics https://www.xzztools.com</Footer>
    </Window>
  );
};

export default App;
